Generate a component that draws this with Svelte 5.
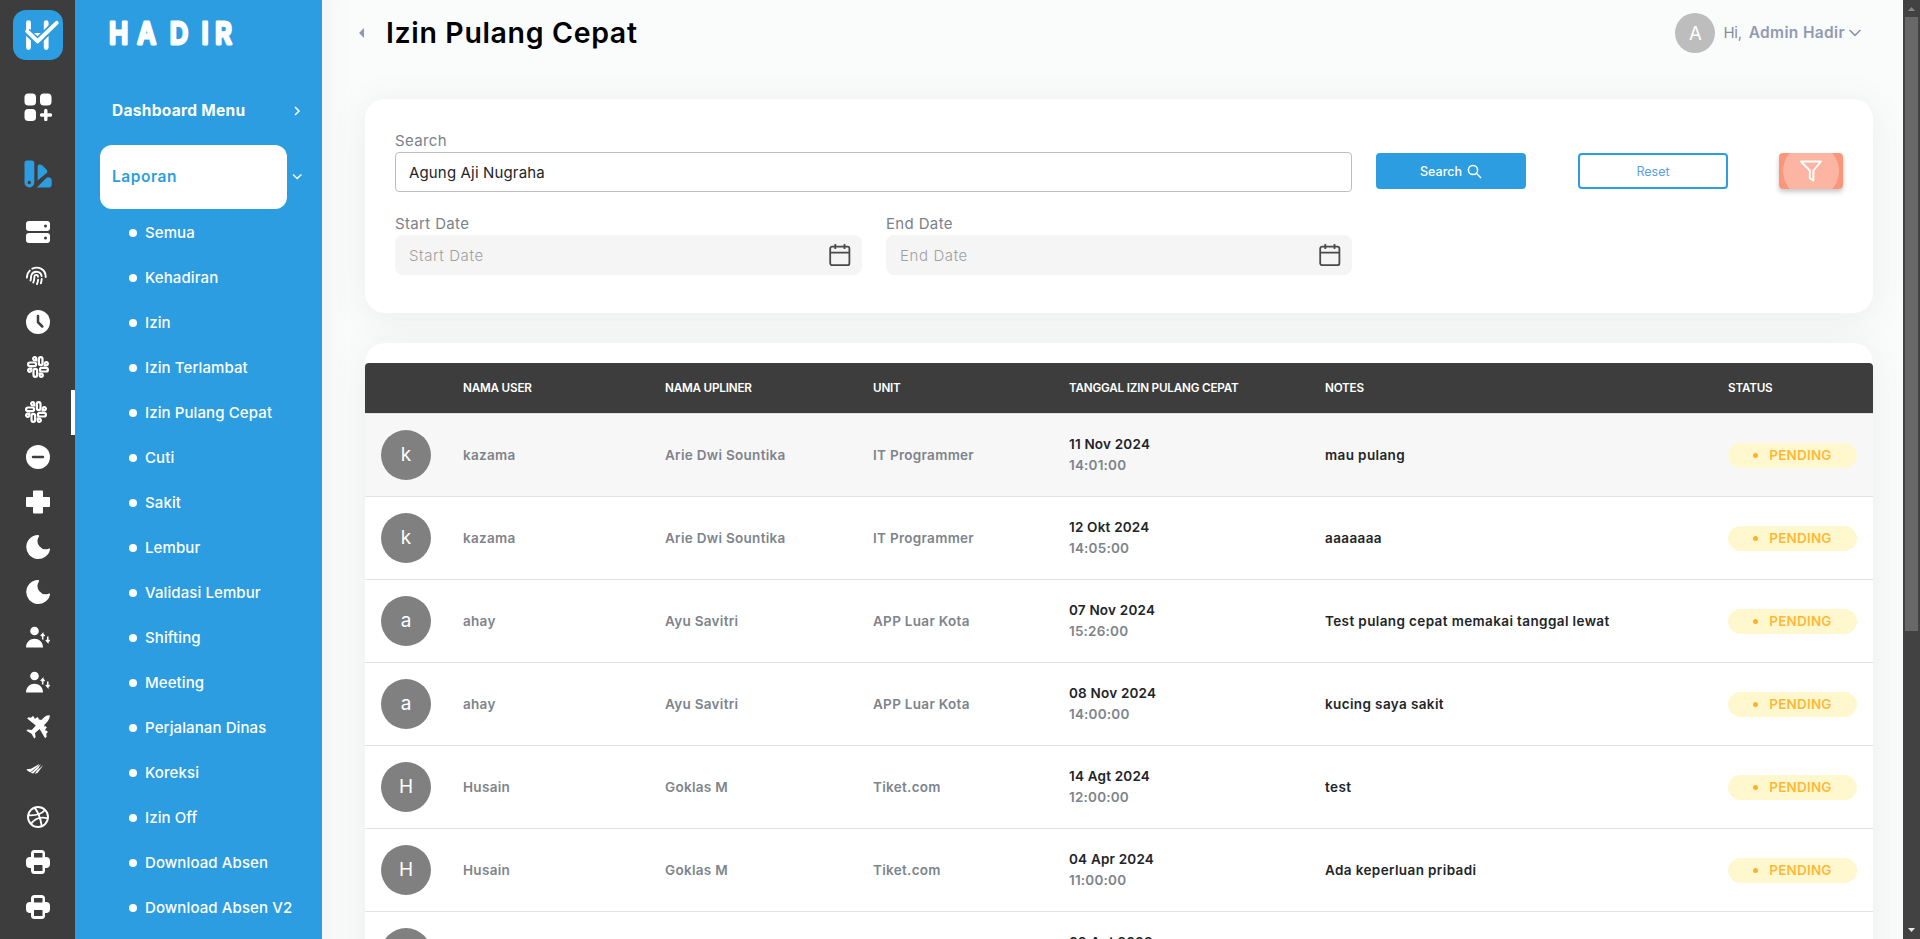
<script>
  const menu = [
    { label: 'Semua', icon: 'server' },
    { label: 'Kehadiran', icon: 'finger' },
    { label: 'Izin', icon: 'clock' },
    { label: 'Izin Terlambat', icon: 'slack' },
    { label: 'Izin Pulang Cepat', icon: 'slack', active: true },
    { label: 'Cuti', icon: 'minus' },
    { label: 'Sakit', icon: 'cross' },
    { label: 'Lembur', icon: 'moon' },
    { label: 'Validasi Lembur', icon: 'moon' },
    { label: 'Shifting', icon: 'shift' },
    { label: 'Meeting', icon: 'shift' },
    { label: 'Perjalanan Dinas', icon: 'plane' },
    { label: 'Koreksi', icon: 'checks' },
    { label: 'Izin Off', icon: 'ball' },
    { label: 'Download Absen', icon: 'printer' },
    { label: 'Download Absen V2', icon: 'printer' }
  ];

  const columns = ['', 'NAMA USER', 'NAMA UPLINER', 'UNIT', 'TANGGAL IZIN PULANG CEPAT', 'NOTES', 'STATUS'];

  const rows = [
    { user: 'kazama', upliner: 'Arie Dwi Sountika', unit: 'IT Programmer', date: '11 Nov 2024', time: '14:01:00', notes: 'mau pulang' },
    { user: 'kazama', upliner: 'Arie Dwi Sountika', unit: 'IT Programmer', date: '12 Okt 2024', time: '14:05:00', notes: 'aaaaaaa' },
    { user: 'ahay', upliner: 'Ayu Savitri', unit: 'APP Luar Kota', date: '07 Nov 2024', time: '15:26:00', notes: 'Test pulang cepat memakai tanggal lewat' },
    { user: 'ahay', upliner: 'Ayu Savitri', unit: 'APP Luar Kota', date: '08 Nov 2024', time: '14:00:00', notes: 'kucing saya sakit' },
    { user: 'Husain', upliner: 'Goklas M', unit: 'Tiket.com', date: '14 Agt 2024', time: '12:00:00', notes: 'test' },
    { user: 'Husain', upliner: 'Goklas M', unit: 'Tiket.com', date: '04 Apr 2024', time: '11:00:00', notes: 'Ada keperluan pribadi' }
  ];
  const lastRow = { initial: 'H', date: '09 Agt 2023' };
</script>

{#snippet icon(name)}
  <svg width="24" height="24" viewBox="0 0 24 24" fill="#fff">
    {#if name === 'server'}
      <rect x="0" y="1" width="24" height="10" rx="3" />
      <rect x="0" y="13" width="24" height="10" rx="3" />
      <circle cx="19.5" cy="6" r="1.5" fill="#3d3d3d" />
      <circle cx="19.5" cy="18" r="1.5" fill="#3d3d3d" />
    {:else if name === 'finger'}
      <g fill="none" stroke="#fff" stroke-width="1.9" stroke-linecap="round">
        <path d="M.9 12.6c0-3 1-5.3 2.9-7" />
        <path d="M6.300 3.700C12.500 .8 19.700 4.300 19.700 12" />
        <path d="M4.500 15.500c.7-2 .3-4 .9-5.500C7.100 5.400 14.600 5.600 15.600 11" />
        <path d="M15.700 14c-.1 1.500-.4 3-.8 4.300" />
        <path d="M12 11.800c0-2.600-3.600-2.600-3.600 0 0 2.400-.4 4-1.100 5.700" />
        <path d="M12.100 14.800c-.2 1.500-.6 3-1.100 4.300" />
      </g>
    {:else if name === 'clock'}
      <circle cx="12" cy="12" r="12" />
      <path d="M12 6v6.200l4.300 4.300" fill="none" stroke="#3d3d3d" stroke-width="2.500" stroke-linecap="round" />
    {:else if name === 'slack'}
      <g fill="none" stroke="#fff" stroke-width="2.200">
        <rect x="12.900" y="2.100" width="3.600" height="8" rx="1.800" />
        <rect x="7.500" y="13.900" width="3.600" height="8" rx="1.800" />
        <rect x="2.100" y="7.500" width="8" height="3.600" rx="1.800" />
        <rect x="13.900" y="12.900" width="8" height="3.600" rx="1.800" />
        <path d="M10.300 5.300V3.900a1.600 1.600 0 1 0-1.600 1.400z" />
        <path d="M13.700 18.700v1.400a1.600 1.600 0 1 0 1.600-1.400z" />
        <path d="M18.700 10.300h1.400a1.600 1.600 0 1 0-1.400-1.600z" />
        <path d="M5.300 13.700H3.900a1.600 1.600 0 1 0 1.400 1.600z" />
      </g>
    {:else if name === 'minus'}
      <circle cx="12" cy="12" r="12" />
      <path d="M7 12h10" stroke="#3d3d3d" stroke-width="2.400" stroke-linecap="round" />
    {:else if name === 'cross'}
      <path d="M8 .6h8a1 1 0 0 1 1 1V7h6a1 1 0 0 1 1 1v8a1 1 0 0 1-1 1h-6v5.400a1 1 0 0 1-1 1H8a1 1 0 0 1-1-1V17H1a1 1 0 0 1-1-1V8a1 1 0 0 1 1-1h6V1.600a1 1 0 0 1 1-1z" />
    {:else if name === 'moon'}
      <path d="M11.800 0A12 12 0 1 0 24 14.400c.2-1-.6-1-1.400-.7A8.200 8.200 0 0 1 12.800 1.700c.6-1 .3-1.700-1-1.700z" />
    {:else if name === 'shift'}
      <circle cx="8.500" cy="6" r="4.300" />
      <path d="M0 22.500c0-11.600 17-11.600 17 0z" />
      <path d="M16.700 14.500V9l-1.900 2m1.900-2 1.900 2M21.800 11.500V17l-1.900-2m1.900 2 1.900-2" fill="none" stroke="#fff" stroke-width="1.500" />
    {:else if name === 'plane'}
      <path d="M23.800.4c-1.800-.8-4 .3-5.300 1.600l-3.200 3.100-3-.8.600-.9-1.600-1.500-1.800 1.700-1.700-.4.600-.9L6.900.9 4.900 2.700l-2.300-.5L1.200 3.500l8.600 6.900-4 4.600-4.100-.6L.4 15.800l4.300 2.400 1 .9 2.500 4.500 1.400-1.400-.6-4.200 4.600-4 5.500 9.200 1.500-1.500-.3-2.900 1.600-1.800-1.300-1.400-.8.600-.5-2 1.600-1.700-1.400-1.500-.9.700-.4-1.700 3.100-3.300c1.300-1.300 2.600-4.500 2.600-6.300z" />
    {:else if name === 'checks'}
      <path d="M.5 9.300 5 8.700 13.400 4 12 6.200 4.500 12.200C3 12.200 1.500 11 .5 9.300z" />
      <path d="M5 13.200 15.300 4.100 12.300 9.200 7.500 13.800z" transform="translate(-.3 -.2)" />
      <path d="m8.700 14 2.200-3.300L17.300 5l-5.600 7.800z" />
    {:else if name === 'ball'}
      <g fill="none" stroke="#fff" stroke-width="1.900">
        <circle cx="12" cy="12" r="10" />
        <path d="M8.500 2.700C12 7 14.700 13.500 15.700 21.200M2.200 10.300c6 .3 13-.7 16.800-5.300M5 19c3.500-5.300 10-7.400 17-5.700" />
      </g>
    {:else if name === 'printer'}
      <path d="M5 7V3.500A3.500 3.500 0 0 1 8.500 0h7A3.500 3.500 0 0 1 19 3.500V7h1a4 4 0 0 1 4 4v3a4 4 0 0 1-4 4h-1v2.500a3.500 3.500 0 0 1-3.500 3.500h-7A3.500 3.500 0 0 1 5 20.500V18H4a4 4 0 0 1-4-4v-3a4 4 0 0 1 4-4zM8 3v4.500h8.500V3zM8 15v6h8.500v-6z" fill-rule="evenodd" />
    {/if}
  </svg>
{/snippet}

{#snippet calendar()}
  <svg width="22" height="24" viewBox="0 0 22 24" fill="none" stroke="#4a4a4a" stroke-width="1.800">
    <rect x="1.200" y="3.600" width="19.200" height="18.600" rx="2" />
    <path d="M1.200 9.600h19.200M6.300 1v5M15.500 1v5" />
  </svg>
{/snippet}

<div class="page">
  <aside class="rail">
    <div class="brand">
      <svg width="50" height="50" viewBox="0 0 50 50">
        <g stroke="#fff" stroke-width="4.800" stroke-linecap="round" fill="none">
          <path d="M15.500 12.600v24.900M33.200 12.600v24.900" />
          <path d="M17 24.500h14" stroke-width="3" />
        </g>
        <path d="M14 21.500 24.500 31.500 43.500 13" fill="none" stroke="#2c9de0" stroke-width="7.500" />
        <path d="M14.200 21.100 24.600 31.300 43.700 12.900" fill="none" stroke="#fff" stroke-width="4" stroke-linecap="round" stroke-linejoin="round" />
      </svg>
    </div>
    <svg class="apps" width="28" height="28" viewBox="0 0 28 28" fill="#fff">
      <rect x=".5" y=".5" width="11.500" height="12" rx="3.800" />
      <rect x="16" y=".5" width="11.500" height="12" rx="3.800" />
      <rect x=".5" y="16" width="11.500" height="12" rx="3.800" />
      <path d="M21.800 17.500v9M17.500 22h9" stroke="#fff" stroke-width="3.400" stroke-linecap="round" />
    </svg>
    <svg class="swatch" width="28" height="28" viewBox="0 0 28 28" fill="#2c9de0">
      <path d="M3 .5h4.500A3 3 0 0 1 10.300 3.500v19a4.900 4.900 0 0 1-9.800 0V3A2.500 2.500 0 0 1 3 .5z" />
      <circle cx="5.300" cy="22.500" r="1.700" fill="#3d3d3d" />
      <path d="M13.600 20.500V6c1-2.200 3.500-1.700 4.600-.7l4.200 4.200c1.400 1.500 1.100 2.700 0 3.800z" />
      <path d="m12.800 27.500 9-9c1.700-1.700 3.700-1.600 5-.3.700.7.900 1.500.9 2.500V25a2.700 2.700 0 0 1-2.700 2.500z" />
    </svg>
    <div class="rail-list">
      {#each menu as item}
        <div class="rail-item" class:active={item.active}>{@render icon(item.icon)}</div>
      {/each}
    </div>
  </aside>

  <nav class="side">
    <svg class="wordmark" width="130" height="34" viewBox="0 0 130 34">
      <text y="28.500" x="0 32.800 70.500 107.500 123.300" transform="scale(.86 1)">HADIR</text>
    </svg>
    <div class="group">
      <span>Dashboard Menu</span>
      <svg width="10" height="12" viewBox="0 0 10 12"><path d="m3 2 4 4-4 4" /></svg>
    </div>
    <div class="group open">
      <span>Laporan</span>
      <svg width="12" height="10" viewBox="0 0 12 10"><path d="m2 2.500 4.200 4 4.200-4" /></svg>
    </div>
    <ul>
      {#each menu as item}
        <li><i></i>{item.label}</li>
      {/each}
    </ul>
  </nav>

  <main>
    <header>
      <svg class="back" width="6" height="12" viewBox="0 0 6 12"><path d="M0 6 5 1v10z" fill="#9296b5" /></svg>
      <h1>Izin Pulang Cepat</h1>
      <div class="me">
        <div class="me-avatar">A</div>
        <span class="hi">Hi,</span>
        <b>Admin Hadir</b>
        <svg width="14" height="10" viewBox="0 0 14 10"><path d="m1.500 2 5.500 5.300L12.500 2" fill="none" stroke="#8c93ab" stroke-width="1.600" /></svg>
      </div>
    </header>

    <section class="card filter">
      <div class="fields">
        <div class="field wide">
          <label for="q">Search</label>
          <div class="box text" id="q">Agung Aji Nugraha</div>
        </div>
        <div class="field">
          <label for="s">Start Date</label>
          <div class="box date" id="s"><span>Start Date</span>{@render calendar()}</div>
        </div>
        <div class="field">
          <label for="e">End Date</label>
          <div class="box date" id="e"><span>End Date</span>{@render calendar()}</div>
        </div>
      </div>
      <div class="actions">
        <button class="search">
          Search
          <svg width="15" height="15" viewBox="0 0 15 15" fill="none" stroke="#fff" stroke-width="1.500"><circle cx="6" cy="6" r="4.600" /><path d="m9.300 9.300 4.700 4.700" /></svg>
        </button>
        <button class="reset">Reset</button>
        <button class="funnel" aria-label="Filter">
          <svg width="24" height="24" viewBox="0 0 24 24" fill="none" stroke="#fff" stroke-width="1.900" stroke-linejoin="round"><path d="M2 2.500h20l-7.600 9v10l-3.600-2.200v-7.800z" /></svg>
        </button>
      </div>
    </section>

    <section class="card table">
      <div class="row head">
        {#each columns as c}<div>{c}</div>{/each}
      </div>
      {#each rows as r, i}
        <div class="row" class:hover={i === 0}>
          <div class="avatar">{r.user[0]}</div>
          <div>{r.user}</div>
          <div>{r.upliner}</div>
          <div>{r.unit}</div>
          <div class="when"><span>{r.date}</span>{r.time}</div>
          <div class="dark">{r.notes}</div>
          <div class="pill"><i></i>PENDING</div>
        </div>
      {/each}
      <div class="row">
        <div class="avatar"></div>
        <div></div>
        <div></div>
        <div></div>
        <div class="when"><span>{lastRow.date}</span>&nbsp;</div>
      </div>
    </section>
  </main>

  <div class="scroll">
    <svg width="17" height="17" viewBox="0 0 17 17"><path d="M5 11h7L8.500 7z" fill="#868686" /></svg>
    <div class="thumb"></div>
    <svg class="down" width="17" height="17" viewBox="0 0 17 17"><path d="M5 6h7L8.500 10z" fill="#e8e8e8" /></svg>
  </div>
</div>

<style>
  :global(body) { overflow: hidden; }
  .page {
    display: flex;
    width: 1920px;
    height: 939px;
    overflow: hidden;
    font-family: Inter, sans-serif;
    background: #fafcfb;
  }
  .page :global(*) { box-sizing: border-box; }
  svg { display: block; flex: none; }

  .rail {
    width: 75px;
    flex: none;
    background: #3d3d3d;
    display: flex;
    flex-direction: column;
  }
  .brand {
    width: 50px;
    height: 50px;
    margin: 10px 0 0 13px;
    border-radius: 13px;
    background: #2c9de0;
  }
  .apps { margin: 33px 0 0 23.500px; }
  .swatch { margin: 39px 0 0 23.500px; }
  .rail-list { margin-top: 22px; }
  .rail-item { height: 45px; padding: 10px 0 0 26px; }
  .rail-item.active { border-right: 4px solid #fff; padding-left: 24px; }

  .side {
    width: 247px;
    flex: none;
    background: #2c9de0;
    color: #fff;
    font-size: 15px;
  }
  .wordmark { margin: 15px 0 0 34px; overflow: visible; }
  .wordmark text {
    font-family: Inter, sans-serif;
    font-size: 30px;
    font-weight: 600;
    fill: #fff;
    stroke: #fff;
    stroke-width: 2.800px;
    stroke-linejoin: round;
  }
  .group { display: flex; align-items: center; height: 64px; }
  .group span {
    width: 187px;
    height: 64px;
    line-height: 64px;
    margin-left: 25px;
    padding-left: 12px;
    border-radius: 12px;
    font-size: 15.500px;
    font-weight: 700;
    letter-spacing: 0.300px;
  }
  .group svg { margin-left: 5px; fill: none; stroke: #fff; stroke-width: 1.500px; }
  .wordmark + .group { margin-top: 30px; }
  .group.open { margin-top: 2px; }
  .group.open svg { margin-left: 4px; }
  .group.open span { background: #fff; color: #2c9de0; font-weight: 600; letter-spacing: 0.550px; }
  ul { list-style: none; margin: 1px 0 0; padding: 0; }
  li {
    display: flex;
    align-items: center;
    height: 45px;
    padding-left: 54px;
    letter-spacing: 0.100px;
    white-space: nowrap;
    font-weight: 500;
  }
  li i { width: 8px; height: 8px; border-radius: 50%; background: #fff; margin-right: 8px; }

  main {
    width: 1581px;
    flex: none;
    padding: 0 30px 0 43px;
    box-shadow: inset 30px 0 30px -30px rgba(70, 95, 85, .08);
  }
  header { display: flex; align-items: center; height: 65px; margin-left: -6px; }
  h1 { margin: 0 0 0 21px; font-size: 28.500px; line-height: 36px; font-weight: 600; color: #000; letter-spacing: 0.650px; }
  .me { display: flex; align-items: center; margin-left: auto; margin-right: 11px; font-size: 15px; color: #858b9c; }
  .me-avatar {
    width: 40px;
    height: 40px;
    border-radius: 50%;
    background: #bdbdbd;
    color: #fff;
    font-size: 18.500px;
    line-height: 41px;
    text-align: center;
  }
  .hi { margin: 0 7px 0 8px; letter-spacing: -0.300px; }
  .me b { font-size: 15.500px; font-weight: 600; margin-right: 3px; color: #929ab2; letter-spacing: 0.350px; }

  .card {
    background: #fff;
    border-radius: 20px;
    box-shadow: 0 5px 36px rgba(70, 85, 80, .09);
  }
  .filter {
    display: flex;
    height: 214px;
    margin-top: 34px;
    padding: 29px 30px 0;
  }
  .fields {
    display: grid;
    grid-template-columns: 467px 466px;
    column-gap: 24px;
    grid-auto-rows: 83px;
  }
  .wide { grid-column: span 2; }
  label { display: block; height: 24px; line-height: 26px; font-size: 15px; color: #7a828b; font-weight: 400; letter-spacing: 0.350px; }
  .box {
    display: flex;
    align-items: center;
    height: 40px;
    font-size: 15px;
    padding-left: 14px;
  }
  .box.text { border: 1px solid #bdbdbd; border-radius: 4px; padding-left: 13px; color: #212529; letter-spacing: 0.150px; }
  .box.date { background: #f5f5f5; border-radius: 8px; color: #a0a0a0; justify-content: space-between; padding-right: 11px; }
  .box.date span { font-weight: 300; letter-spacing: 0.600px; }
  .actions { display: flex; margin: 25px 0 0 24px; height: 36px; }
  button {
    font-family: inherit;
    font-size: 12.500px;
    height: 36px;
    border: 0;
    border-radius: 4px;
    padding: 0;
    display: flex;
    align-items: center;
    justify-content: center;
    gap: 5px;
  }
  .search { width: 150px; background: #2c9de0; color: #fff; font-weight: 500; }
  .reset { width: 150px; margin-left: 52px; background: #fff; border: 2px solid #2c9de0; color: #5b9fe3; }
  .funnel {
    width: 64px;
    margin-left: 51px;
    background: radial-gradient(circle 28px at center, #fcb5a2 27.500px, #fa977b 28.200px);
    box-shadow: 0 3px 5px rgba(0, 0, 0, .22);
  }

  .table { margin-top: 30px; height: 720px; padding-top: 20px; }
  .row {
    display: grid;
    grid-template-columns: 98px 202px 208px 196px 256px 403px 145px;
    align-items: center;
    height: 83px;
    border-top: 1px solid #dee2e4;
    font-size: 13.500px;
    font-weight: 600;
    letter-spacing: 0.300px;
    color: #7d848c;
  }
  .row.head {
    height: 50px;
    border: 0;
    border-radius: 4px 4px 0 0;
    background: #3d3d3d;
    color: #fff;
    font-size: 11.700px;
    font-weight: 600;
    letter-spacing: -0.200px;
  }
  .row.hover { background: #f7f7f7; }
  .avatar {
    width: 50px;
    height: 50px;
    margin-left: 16px;
    border-radius: 50%;
    background: #808080;
    color: #fff;
    font-size: 19px;
    font-weight: 400;
    line-height: 50px;
    text-align: center;
    letter-spacing: 0;
  }
  .when { line-height: 21px; letter-spacing: 0.200px; }
  .when span { display: block; color: #212529; }
  .dark { color: #212529; letter-spacing: 0.380px; }
  .pill {
    display: flex;
    align-items: center;
    justify-content: center;
    width: 129px;
    height: 25px;
    border-radius: 13px;
    background: #fff8cf;
    color: #ffb836;
    letter-spacing: 0.200px;
  }
  .pill i { width: 5px; height: 5px; border-radius: 50%; background: #ffb229; margin-right: 11px; }

  .scroll { width: 17px; flex: none; background: #424242; display: flex; flex-direction: column; }
  .thumb { width: 13px; height: 614px; margin-left: 2px; background: #686868; }
  .down { margin-top: auto; }
</style>
